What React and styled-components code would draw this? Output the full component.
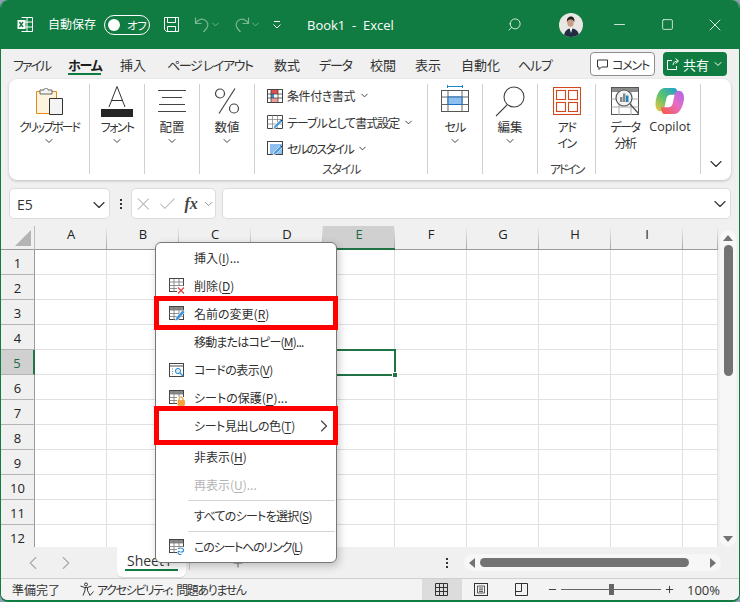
import React from 'react';
import styled, { createGlobalStyle } from 'styled-components';
import {
  ChevronDown,
  ChevronLeft,
  ChevronRight,
  Minus,
  Plus,
  Search,
  Square,
  X,
  Check,
} from 'lucide-react';

const JP = `"Noto Sans CJK JP", "Noto Sans", sans-serif`;
const LATIN = `"Open Sans", "Noto Sans CJK JP", sans-serif`;
const GREEN = '#107c41';
const INK = '#2b2b2b';

const GlobalStyle = createGlobalStyle`
  html, body {
    margin: 0;
    padding: 0;
    background: #8f9fb4;
  }
  body {
    font-family: ${JP};
    font-feature-settings: "palt";
    color: ${INK};
  }
`;

const Window = styled.div`
  width: 740px;
  height: 602px;
  box-sizing: border-box;
  display: flex;
  flex-direction: column;
  background: #f0f0f0;
  border: solid ${GREEN};
  border-width: 0 1px 2px 1px;
  border-radius: 8px;
  overflow: hidden;
  position: relative;
`;

/* title bar */
const TitleBar = styled.div`
  height: 49px;
  flex: none;
  margin: 0 -1px;
  background: ${GREEN};
  color: #fff;
  display: flex;
  align-items: center;
  padding-left: 17px;
  font-size: 12px;
`;

const AutoSave = styled.span`
  margin-left: 14px;
  margin-top: -2px;
  width: 48px;
  font-size: 12px;
  white-space: nowrap;
`;

const Toggle = styled.div`
  margin-left: 8px;
  width: 46px;
  height: 20px;
  box-sizing: border-box;
  border: 1px solid #fff;
  border-radius: 10px;
  display: flex;
  align-items: center;
  padding-left: 3px;
  gap: 7px;
  font-size: 11.5px;
  line-height: 16px;
  letter-spacing: -0.6px;
  &::before {
    content: '';
    width: 12px;
    height: 12px;
    border-radius: 50%;
    background: #fff;
  }
`;

const QuickIcon = styled.span`
  display: flex;
  align-items: center;
  margin-left: ${(p) => p.$gap}px;
  opacity: ${(p) => (p.$dim ? 0.45 : 1)};
`;

const DocTitle = styled.span`
  margin-left: 25px;
  width: 200px;
  font-family: ${LATIN};
  font-size: 13px;
  white-space: pre;
`;

const Avatar = styled.span`
  margin-left: 37px;
  width: 24px;
  height: 24px;
  display: block;
`;

const WinButton = styled.span`
  display: flex;
  justify-content: center;
  align-items: center;
  width: 48px;
`;

const WinButtons = styled.div`
  margin-left: 12px;
  display: flex;
`;

/* tabs row */
const MenuRow = styled.div`
  height: 30px;
  flex: none;
  display: flex;
  align-items: center;
  position: relative;
  padding-left: 12px;
  font-size: 13px;
`;

const MenuTab = styled.span`
  width: ${(p) => p.$w}px;
  margin-right: ${(p) => p.$gap}px;
  height: 30px;
  line-height: 32px;
  white-space: nowrap;
  box-sizing: border-box;
  letter-spacing: ${(p) => p.$ls || 0}px;
  font-weight: ${(p) => (p.$active ? 700 : 400)};
  color: ${(p) => (p.$active ? '#1d1d1d' : '#333')};
  position: relative;
  &::after {
    content: '';
    display: ${(p) => (p.$active ? 'block' : 'none')};
    position: absolute;
    left: 0;
    right: 0;
    top: 24px;
    height: 2px;
    background: ${GREEN};
  }
`;

const MenuRight = styled.div`
  margin-left: auto;
  margin-right: 12px;
  display: flex;
  gap: 8px;
  align-self: flex-start;
  margin-top: 3px;
`;

const CommentButton = styled.span`
  width: 65px;
  height: 24px;
  box-sizing: border-box;
  background: #fff;
  border: 1px solid #8f8f8f;
  border-radius: 4px;
  display: flex;
  align-items: center;
  justify-content: center;
  gap: 3px;
  font-size: 12px;
  letter-spacing: -1.2px;
  color: #333;
`;

const ShareButton = styled.span`
  width: 64px;
  height: 24px;
  background: ${GREEN};
  color: #fff;
  border-radius: 4px;
  display: flex;
  align-items: center;
  justify-content: center;
  gap: 3px;
  font-size: 13px;
`;

/* ribbon */
const Ribbon = styled.div`
  height: 101px;
  flex: none;
  margin: 0 8px;
  box-sizing: border-box;
  background: #fff;
  border-radius: 8px;
  box-shadow: 0 1px 3px rgba(0, 0, 0, 0.22);
  display: flex;
  padding: 5px 0 6px;
`;

const Group = styled.div`
  width: ${(p) => p.$w}px;
  flex: none;
  box-sizing: border-box;
  border-right: 1px solid #d0d0d0;
  display: flex;
  flex-direction: column;
  align-items: center;
  position: relative;
`;

const BigIcon = styled.div`
  height: 32px;
  box-sizing: border-box;
  margin-top: 1px;
  padding-bottom: ${(p) => p.$lift || 0}px;
  display: flex;
  align-items: center;
  justify-content: center;
`;

const BigLabel = styled.div`
  margin-top: 2px;
  font-size: ${(p) => (p.$ls ? 12 : 12.5)}px;
  letter-spacing: ${(p) => p.$ls || 0}px;
  line-height: 16px;
  text-align: center;
  white-space: pre-line;
  color: #333;
`;

const SmallChevron = styled(ChevronDown)`
  margin-top: 0;
  color: #444;
  flex: none;
`;

const GroupName = styled.div`
  margin-top: auto;
  margin-bottom: -2px;
  font-size: 12px;
  letter-spacing: ${(p) => p.$ls || 0}px;
  line-height: 15px;
  color: #444;
  text-align: center;
  white-space: nowrap;
`;

const StyleList = styled.div`
  align-self: flex-start;
  padding-left: 12px;
  margin-top: -1px;
  display: flex;
  flex-direction: column;
  gap: 1.5px;
`;

const StyleRow = styled.div`
  height: 25px;
  display: flex;
  align-items: center;
  gap: 4px;
  font-size: 12px;
  color: #333;
  white-space: nowrap;
`;

const StyleText = styled.span`
  letter-spacing: ${(p) => p.$ls || 0}px;
`;

const RibbonPair = styled.div`
  display: flex;
  gap: 3px;
  padding: 0 0 0 10px;
  align-self: flex-start;
`;

const PairItem = styled.div`
  width: ${(p) => p.$w}px;
  display: flex;
  flex-direction: column;
  align-items: center;
`;

const CopilotLabel = styled(BigLabel)`
  font-family: ${LATIN};
  font-size: 12.5px;
`;

const CollapseButton = styled.div`
  flex: 1;
  display: flex;
  justify-content: center;
  align-items: flex-end;
  color: #333;
`;

/* formula bar */
const FormulaBar = styled.div`
  height: 31px;
  flex: none;
  margin: 8px 8px 0;
  display: flex;
  align-items: stretch;
`;

const FieldBox = styled.div`
  background: #fff;
  border: 1px solid #dcdcdc;
  border-radius: 5px;
  box-sizing: border-box;
  display: flex;
  align-items: center;
`;

const NameBox = styled(FieldBox)`
  width: 101px;
  justify-content: space-between;
  padding: 2px 0 0 7px;
  font-family: ${LATIN};
  font-size: 14px;
  color: #333;
`;

const Dots = styled.span`
  width: 21px;
  flex: none;
  display: flex;
  flex-direction: column;
  align-items: center;
  justify-content: center;
  gap: 2px;
  i {
    width: 2px;
    height: 2px;
    background: #333;
    display: block;
  }
`;

const FxBox = styled(FieldBox)`
  width: 85px;
  padding-left: 1px;
  gap: 3px;
`;

const FxText = styled.span`
  font-family: "Liberation Serif", serif;
  font-style: italic;
  font-weight: 700;
  font-size: 16px;
  color: #444;
  margin-left: 4px;
  margin-right: 1px;
`;

const InputBox = styled(FieldBox)`
  flex: 1;
  margin-left: 6px;
  justify-content: flex-end;
`;

/* sheet */
const SheetArea = styled.div`
  height: 321px;
  flex: none;
  margin-top: 7px;
  display: flex;
  position: relative;
`;

const Sheet = styled.div`
  width: 717px;
  flex: none;
  overflow: hidden;
  display: grid;
  grid-template-columns: 34px repeat(9, 72px) 1fr;
  grid-auto-rows: 25px;
  grid-template-rows: 24px;
  background: #fff;
`;

const Corner = styled.div`
  background: #f0f0f0;
  border-bottom: 1px solid #9a9a9a;
  border-right: 1px solid #bdbdbd;
  box-sizing: border-box;
  display: flex;
  justify-content: flex-end;
  align-items: flex-end;
  padding: 0 3px 3px 0;
`;

const ColHead = styled.div`
  box-sizing: border-box;
  background: linear-gradient(#f0f0f0, #a8a8a8) right / 1px 100% no-repeat,
    ${(p) => (p.$on ? '#d0d0d0' : '#f0f0f0')};
  color: ${(p) => (p.$on ? '#1f6b45' : '#222')};
  border-bottom: ${(p) => (p.$on ? `2px solid #217346` : '1px solid #9a9a9a')};
  font-family: ${LATIN};
  font-size: 13px;
  text-align: center;
  line-height: 17px;
`;

const RowHead = styled.div`
  box-sizing: border-box;
  background: ${(p) => (p.$on ? '#d0d0d0' : '#f0f0f0')};
  color: ${(p) => (p.$on ? '#1f6b45' : '#222')};
  border-bottom: 1px solid #b5b5b5;
  border-right: ${(p) => (p.$on ? `2px solid #217346` : '1px solid #9a9a9a')};
  font-family: ${LATIN};
  font-size: 13px;
  text-align: center;
  line-height: 26px;
`;

const Cell = styled.div`
  box-sizing: border-box;
  border-right: 1px solid #e1e1e1;
  border-bottom: 1px solid #e1e1e1;
  position: relative;
  ${(p) =>
    p.$selected &&
    `
    outline: 2px solid #217346;
    outline-offset: -1px;
    z-index: 1;
    &::after {
      content: '';
      position: absolute;
      right: -4px;
      bottom: -4px;
      background: #217346;
      border: 1px solid #fff;
      box-sizing: content-box;
      width: 4px;
      height: 4px;
    }
  `}
`;

const VScroll = styled.div`
  width: 20px;
  display: flex;
  flex-direction: column;
  align-items: center;
  padding-top: 4px;
  box-sizing: border-box;
`;

const VTrack = styled.div`
  width: 16px;
  height: 100%;
  background: #f7f7f7;
  border-radius: 8px;
  display: flex;
  flex-direction: column;
  align-items: center;
  padding-top: 5px;
  box-sizing: border-box;
`;

const VThumb = styled.div`
  width: 9px;
  height: 131px;
  margin-top: 4px;
  background: #737373;
  border-radius: 5px;
`;

const VSpacer = styled.div`
  flex: 1;
`;

const ArrowUp = styled.div`
  width: 0;
  height: 0;
  border: 5px solid transparent;
  border-top: 0;
  border-bottom: 6px solid #737373;
`;

const ArrowDown = styled(ArrowUp)`
  border-top: 6px solid #737373;
  border-bottom: 0;
  margin-bottom: 5px;
`;

/* context menu */
const ContextMenu = styled.div`
  position: absolute;
  left: 154px;
  top: 16px;
  width: 182px;
  height: 321px;
  box-sizing: border-box;
  background: #fff;
  border: 1px solid #777;
  border-radius: 6px;
  box-shadow: 2px 3px 8px rgba(0, 0, 0, 0.22);
  padding-top: 1px;
  z-index: 5;
  font-size: 12px;
`;

const MenuItem = styled.div`
  height: 28px;
  display: flex;
  align-items: center;
  padding-left: 13px;
  color: ${(p) => (p.$disabled ? '#b4b4b4' : '#2f2f2f')};
  white-space: nowrap;
  position: relative;
`;

const ItemIcon = styled.span`
  width: 16px;
  height: 16px;
  flex: none;
  margin-right: 9px;
  display: block;
`;

const ItemText = styled.span`
  margin-top: -2px;
  letter-spacing: ${(p) => p.$ls || 0}px;
`;

const Key = styled.span`
  text-decoration: underline;
  text-underline-offset: 2px;
`;

const SubArrow = styled(ChevronRight)`
  position: absolute;
  right: 2px;
  top: 4px;
  color: #444;
`;

const MenuSep = styled.div`
  height: 3px;
  display: flex;
  align-items: center;
  padding-left: 32px;
  padding-right: 1px;
  &::after {
    content: '';
    flex: 1;
    height: 1px;
    background: #d4d4d4;
  }
`;

const RedBox = styled.div`
  position: absolute;
  left: -2px;
  width: 184px;
  top: ${(p) => p.$top}px;
  height: ${(p) => p.$h}px;
  box-sizing: border-box;
  border: 5px solid #ff0000;
  pointer-events: none;
`;

/* sheet tabs */
const TabBar = styled.div`
  height: 32px;
  flex: none;
  display: flex;
  align-items: flex-start;
  position: relative;
  border-bottom: 1px solid #cfcfcf;
  box-sizing: border-box;
`;

const NavArrows = styled.div`
  width: 116px;
  height: 31px;
  box-sizing: border-box;
  padding-left: 21px;
  display: flex;
  align-items: center;
  gap: 11px;
  color: #a8a8a8;
`;

const SheetTab = styled.div`
  width: 69px;
  height: 30px;
  box-sizing: border-box;
  background: #fff;
  border-radius: 0 0 6px 6px;
  font-family: ${LATIN};
  font-size: 14px;
  color: #333;
  padding: 5px 0 0 10px;
  line-height: 17px;
  position: relative;
  box-shadow: 0 1px 1px rgba(0, 0, 0, 0.1);
  &::after {
    content: '';
    position: absolute;
    left: 8px;
    right: 8px;
    bottom: 6px;
    height: 2px;
    background: ${GREEN};
  }
`;

const TabSep = styled.span`
  width: 1px;
  height: 16px;
  margin: 7px 0 0 3px;
  background: #c4c4c4;
`;

const AddSheet = styled.span`
  width: 16px;
  height: 31px;
  margin-left: 40px;
  display: flex;
  align-items: center;
  justify-content: center;
  color: #333;
`;

const TabDots = styled(Dots)`
  margin-left: 190px;
  height: 31px;
`;

const HScroll = styled.div`
  margin-left: 7px;
  margin-top: 7px;
  width: 257px;
  height: 17px;
  background: #f7f7f7;
  border-radius: 9px;
  display: flex;
  align-items: center;
  padding: 0 5px;
  box-sizing: border-box;
`;

const HThumb = styled.div`
  width: 209px;
  height: 9px;
  margin-left: 5px;
  background: #737373;
  border-radius: 5px;
`;

const ArrowLeft = styled.div`
  width: 0;
  height: 0;
  border: 5px solid transparent;
  border-left: 0;
  border-right: 6px solid #737373;
`;

const ArrowRight = styled.div`
  width: 0;
  height: 0;
  margin-left: auto;
  border: 5px solid transparent;
  border-right: 0;
  border-left: 6px solid #737373;
`;

/* status bar */
const StatusBar = styled.div`
  flex: 1;
  display: flex;
  align-items: center;
  background: #f3f3f3;
  font-size: 12px;
  color: #333;
  padding: 0 19px 0 11px;
`;

const StatusText = styled.span`
  white-space: pre;
  margin-left: ${(p) => p.$gap || 0}px;
  letter-spacing: ${(p) => p.$ls || 0}px;
  word-spacing: ${(p) => (p.$ls ? 3 : 0)}px;
  display: flex;
  align-items: center;
`;

const ViewButton = styled.span`
  height: 100%;
  width: 40px;
  display: flex;
  align-items: center;
  justify-content: center;
  background: ${(p) => (p.$on ? '#dcdcdc' : 'transparent')};
`;

const ViewGroup = styled.div`
  margin-left: auto;
  height: 100%;
  display: flex;
  margin-right: 5px;
`;

const ZoomSlider = styled.div`
  width: 100px;
  height: 1px;
  margin: 0 3px;
  background: #666;
  position: relative;
  &::after {
    content: '';
    position: absolute;
    left: 48px;
    top: -5px;
    width: 5px;
    height: 11px;
    background: #666;
  }
`;

const ZoomValue = styled.span`
  margin-left: 12px;
  font-family: ${LATIN};
  font-size: 13px;
`;

const ExcelIcon = () => (
  <svg width="17" height="17" viewBox="0 0 17 17">
    <path d="M4.5 1.5h11v14h-11M10 1.5v14M4.5 6h11M4.5 11h11" fill="none" stroke="#fff" />
    <rect x="0.5" y="4" width="8" height="9" fill="#fff" />
    <path d="M2.4 6l3.6 5M6 6l-3.6 5" stroke={GREEN} strokeWidth="1.4" />
  </svg>
);

const SaveIcon = () => (
  <svg width="17" height="17" viewBox="0 0 17 17" fill="none" stroke="#fff">
    <path d="M1.5 1.5h14v14h-12l-2-2z" />
    <path d="M4.5 1.5v5h8v-5M4.5 15.5v-5h8v5" />
  </svg>
);

const UndoIcon = ({ flip }) => (
  <svg width="16" height="17" viewBox="0 0 16 17" fill="none" stroke="#fff" strokeWidth="1.2" style={flip ? { transform: 'scaleX(-1)' } : undefined}>
    <path d="M1.5 1.5v6h6M1.5 7.5C4 4 7 2.5 10 3.5c4 1.5 5 6 2.5 9l-3 3.5" />
  </svg>
);

const PersonAvatar = () => (
  <Avatar>
    <svg width="24" height="24" viewBox="0 0 24 24">
      <defs>
        <clipPath id="av">
          <circle cx="12" cy="12" r="12" />
        </clipPath>
      </defs>
      <g clipPath="url(#av)">
        <rect width="24" height="24" fill="#e9e7e3" />
        <path d="M5 24c0-6 3-8 7-9 5 1 8 3 8 9z" fill="#232c40" />
        <path d="M10.5 15l1.500 5 1.500-5z" fill="#fff" />
        <ellipse cx="11.5" cy="9.5" rx="3.2" ry="4.3" fill="#c99d85" />
        <path d="M8 9c-.5-4 2-5.500 4-5.500s4 1.500 3.300 5.500c-1-2-2-2.500-3.800-2.500S9 7 8 9z" fill="#23201f" />
      </g>
    </svg>
  </Avatar>
);

const ClipboardIcon = () => (
  <svg width="27" height="27" viewBox="0 0 27 27">
    <path d="M.5 3.500h20v22H.5z" fill="#fdf3df" stroke="#e58a0c" />
    <path d="M4 2h4c0-2.500 4-2.500 4 0h4v4H4z" fill="#f3f3f3" stroke="#666" />
    <path d="M13.500 10.500h13v16h-13z" fill="#f4f4f4" stroke="#333" />
  </svg>
);

const FontIcon = () => (
  <svg width="32" height="31" viewBox="0 0 32 31">
    <path d="M8 21L16 .5l8 20.500M10.500 14.500h11" fill="none" stroke="#333" />
    <rect y="23" width="32" height="8" fill="#262626" />
  </svg>
);

const AlignIcon = () => (
  <svg width="28" height="22" viewBox="0 0 28 22" fill="none" stroke="#444">
    <path d="M0 .5h28M4 7.500h20M1 14.500h26M0 21.500h28" />
  </svg>
);

const PercentIcon = () => (
  <svg width="26" height="26" viewBox="0 0 26 26" fill="none" stroke="#444" strokeWidth="1.2">
    <circle cx="6" cy="5.500" r="4.500" />
    <circle cx="20" cy="20.500" r="4.500" />
    <path d="M21 .5L5 25.500" />
  </svg>
);

const ConditionalIcon = () => (
  <svg width="16" height="14" viewBox="0 0 16 14">
    <rect x=".5" y=".5" width="15" height="13" fill="#fff" stroke="#444" />
    <rect x="4" y="1" width="7" height="4" fill="#e04f4f" />
    <rect x="4" y="5" width="3" height="4" fill="#3a8fd8" />
    <rect x="4" y="9" width="7" height="4" fill="#f29a9a" />
    <path d="M.5 5h15M.5 9h15M4 .5v13M11 .5v13" stroke="#444" fill="none" strokeWidth=".8" />
  </svg>
);

const PenMark = () => (
  <>
    <path d="M6 14l1-3 6.500-6.500 2 2L9 13z" fill="#4f9bdc" stroke="#fff" strokeWidth=".6" />
    <path d="M13.500 4.500l2 2" stroke="#333" />
  </>
);

const TableFormatIcon = () => (
  <svg width="16" height="15" viewBox="0 0 16 15">
    <path d="M.5.500h15v13H.5z" fill="#fff" stroke="#444" />
    <path d="M.5 4.500h15M.5 9h15M5.500.5v13M10.500.5v13" stroke="#888" fill="none" strokeWidth=".8" />
    <PenMark />
  </svg>
);

const CellStyleIcon = () => (
  <svg width="16" height="15" viewBox="0 0 16 15">
    <rect x=".5" y=".5" width="15" height="13" fill="#fff" stroke="#444" />
    <rect x="3" y="3" width="12" height="10" fill="#8dc0ee" />
    <PenMark />
  </svg>
);

const CellIcon = () => (
  <svg width="28" height="27" viewBox="0 0 28 27">
    <path d="M6 1.500h16" stroke="#1a86c8" />
    <path d="M6.500 0v3M21.500 0v3" stroke="#1a86c8" />
    <rect x=".5" y="5.500" width="27" height="21" fill="#fff" stroke="#555" />
    <path d="M.5 12h27M.5 19.500h27M7 5.500v21M21 5.500v21" stroke="#666" />
    <rect x="7" y="12" width="14" height="7.500" fill="#8dc0ee" stroke="#1a6fc0" />
  </svg>
);

const SearchBigIcon = () => (
  <svg width="30" height="31" viewBox="0 0 30 31" fill="none" stroke="#444" strokeWidth="1.1">
    <circle cx="19" cy="11" r="10" />
    <path d="M12 19L1 30" />
  </svg>
);

const AddinIcon = () => (
  <svg width="28" height="28" viewBox="0 0 28 28" fill="none" stroke="#d2471c" strokeWidth="1.1">
    <rect x=".5" y=".5" width="27" height="27" />
    <rect x="3.500" y="3.500" width="9" height="9" />
    <rect x="15.500" y="3.500" width="9" height="9" />
    <rect x="3.500" y="15.500" width="9" height="9" />
    <rect x="15.500" y="15.500" width="9" height="9" />
  </svg>
);

const AnalysisIcon = () => (
  <svg width="28" height="28" viewBox="0 0 28 28">
    <rect x=".5" y=".5" width="27" height="27" fill="#fff" stroke="#555" />
    <rect x="1" y="1" width="26" height="4" fill="#8c8c8c" />
    <path d="M.5 12h27M.5 20h27M8 5v23M20 5v23" stroke="#aaa" />
    <circle cx="13" cy="11" r="8" fill="#f2f2f2" stroke="#555" strokeWidth="1.200" />
    <rect x="9" y="10" width="2.500" height="5" fill="#888" />
    <rect x="12" y="6.500" width="2.500" height="8.500" fill="#888" />
    <rect x="15" y="8.500" width="2.500" height="6.500" fill="#1a86c8" />
    <path d="M19 17l9 10" stroke="#555" strokeWidth="1.400" />
  </svg>
);

const CopilotIcon = () => (
  <svg width="30" height="28" viewBox="0 0 30 29">
    <defs>
      <linearGradient id="cpA" x1="0" y1="1" x2="1" y2="0">
        <stop offset="0" stopColor="#f7c33f" />
        <stop offset=".45" stopColor="#5cc46a" />
        <stop offset="1" stopColor="#1c9be0" />
      </linearGradient>
      <linearGradient id="cpB" x1="0" y1="1" x2="1" y2="0">
        <stop offset="0" stopColor="#f55a3c" />
        <stop offset=".55" stopColor="#e66cc4" />
        <stop offset="1" stopColor="#a868ee" />
      </linearGradient>
    </defs>
    <path d="M9 1h10c2 0 3 1 3.500 3L24 8h-8c-3 0-4.500 2-5 5l-2 9c-.5 2-2 3-4 3-3 0-5-3-5-7 0-8 4-17 9-17z" fill="url(#cpA)" />
    <path d="M20 28H10c-2 0-3-1-3.500-3L5.500 21H13c3 0 4.500-2 5-5l2-9c.5-2 2-3 4-3 3.500 0 5.500 3 5.500 7 0 8-4.500 17-9.500 17z" fill="url(#cpB)" />
  </svg>
);

const CommentIcon = () => (
  <svg width="13" height="13" viewBox="0 0 13 13" fill="none" stroke="#333">
    <path d="M1.500 2h10v7H5.500l-2.500 2.500V9H1.500z" />
  </svg>
);

const ShareIcon = () => (
  <svg width="14" height="14" viewBox="0 0 14 14" fill="none" stroke="#fff">
    <path d="M6 3.500H1.500v9h9V9M7 8c.5-3 2-4 5-4M9.500 1.500l3 2.500-3 2.500" />
  </svg>
);

const TableBase = ({ header }) => (
  <>
    <rect x=".5" y=".5" width="14" height="13" fill="#fff" stroke="#444" />
    {header && <rect x="1" y="1" width="13" height="3" fill="#8a8a8a" />}
    <path d="M.5 4h14M.5 7.500h14M.5 10.500h14M5 1v13M10 1v13" stroke="#777" fill="none" strokeWidth=".8" />
  </>
);

const DeleteIcon = () => (
  <svg width="16" height="16" viewBox="0 0 16 16">
    <TableBase />
    <rect x="8" y="8" width="8" height="8" fill="#fff" />
    <path d="M9 9.500l6 6M15 9.500l-6 6" stroke="#e0433f" strokeWidth="1.300" />
  </svg>
);

const RenameIcon = () => (
  <svg width="16" height="16" viewBox="0 0 16 16">
    <TableBase header />
    <path d="M6 15l1-3.500 6.500-7.500 2.500 2-7 8z" fill="#3f93d8" stroke="#fff" strokeWidth=".6" />
  </svg>
);

const CodeIcon = () => (
  <svg width="16" height="16" viewBox="0 0 16 16" fill="none">
    <rect x=".5" y="1.500" width="14" height="13" fill="#fff" stroke="#444" />
    <path d="M1 4h13" stroke="#888" strokeWidth="1.500" />
    <path d="M3 7h1M3 9.500h1M3 12h1" stroke="#888" />
    <circle cx="9" cy="9" r="2.600" stroke="#2a86d0" fill="#d8ebf9" />
    <path d="M11 11l3.500 3.500" stroke="#2a86d0" strokeWidth="1.300" />
  </svg>
);

const ProtectIcon = () => (
  <svg width="16" height="16" viewBox="0 0 16 16">
    <TableBase header />
    <rect x="8" y="7" width="8" height="9" fill="#fff" />
    <path d="M10 10.500V9a2 2 0 0 1 4 0v1.500" stroke="#e58a0c" fill="none" />
    <rect x="9" y="10.500" width="6.500" height="5" fill="#f3a43a" stroke="#e58a0c" strokeWidth=".5" />
  </svg>
);

const LinkIcon = () => (
  <svg width="16" height="16" viewBox="0 0 16 16">
    <TableBase header />
    <rect x="8" y="8" width="8" height="8" fill="#fff" />
    <path d="M9 10c1-1.500 4.500-1.500 5.500.5.500 1.500-1 3-3 2.500M12.500 15.500c-1.500.5-3.500-.5-3.500-2 0-1 1-1.500 2-1" stroke="#2a86d0" fill="none" strokeWidth="1.100" />
  </svg>
);

const A11yIcon = () => (
  <svg width="15" height="15" viewBox="0 0 15 15" fill="none" stroke="#333">
    <circle cx="6" cy="2.500" r="1.500" />
    <path d="M.5 4l4 1.500h3l4-1.500M5 5.500v3l-2 5M7.500 5.500v3l1 2 1.500 3l3.500-4" />
  </svg>
);

const GridViewIcon = () => (
  <svg width="14" height="14" viewBox="0 0 14 14" fill="none" stroke="#333">
    <path d="M.5.500h12v12H.5zM.5 4.500h12M.5 8.500h12M4.500.5v12M8.500.5v12" />
  </svg>
);

const PageViewIcon = () => (
  <svg width="15" height="14" viewBox="0 0 15 14" fill="none" stroke="#333">
    <rect x=".5" y=".5" width="13" height="12" />
    <path d="M3.500 3h7v7h-7zM5 5h4M5 6.800h4M5 8.500h4" strokeWidth=".8" />
  </svg>
);

const BreakViewIcon = () => (
  <svg width="14" height="14" viewBox="0 0 14 14" fill="none" stroke="#333">
    <path d="M.5.500h12v12H.5zM.5 8.500h6v-8" />
  </svg>
);

const columns = ['A', 'B', 'C', 'D', 'E', 'F', 'G', 'H', 'I', ''];
const rows = [1, 2, 3, 4, 5, 6, 7, 8, 9, 10, 11, 12];

const App = () => {
  return (
    <>
      <GlobalStyle />
      <Window>
        <TitleBar>
          <ExcelIcon />
          <AutoSave>自動保存</AutoSave>
          <Toggle>オフ</Toggle>
          <QuickIcon $gap={13}><SaveIcon /></QuickIcon>
          <QuickIcon $gap={14} $dim><UndoIcon /><ChevronDown size={11} /></QuickIcon>
          <QuickIcon $gap={13} $dim><UndoIcon flip /><ChevronDown size={11} /></QuickIcon>
          <QuickIcon $gap={11}>
            <svg width="10" height="8" viewBox="0 0 10 8" fill="none" stroke="#fff"><path d="M2 .5h6M1.500 3.500L5 7l3.500-3.500" /></svg>
          </QuickIcon>
          <DocTitle>Book1  -  Excel</DocTitle>
          <Search size={15} strokeWidth={1.3} style={{ transform: 'scaleX(-1)' }} />
          <PersonAvatar />
          <WinButtons>
            <WinButton><Minus size={17} strokeWidth={1.1} /></WinButton>
            <WinButton><Square size={13} strokeWidth={1.4} /></WinButton>
            <WinButton><X size={20} strokeWidth={1} /></WinButton>
          </WinButtons>
        </TitleBar>

        <MenuRow>
          <MenuTab $w={37} $gap={18} $ls={-2}>ファイル</MenuTab>
          <MenuTab $w={33} $gap={19} $active $ls={-1.2}>ホーム</MenuTab>
          <MenuTab $w={26} $gap={21}>挿入</MenuTab>
          <MenuTab $w={86} $gap={21} $ls={-1.4}>ページ レイアウト</MenuTab>
          <MenuTab $w={26} $gap={19}>数式</MenuTab>
          <MenuTab $w={31} $gap={20} $ls={-1.2}>データ</MenuTab>
          <MenuTab $w={26} $gap={19}>校閲</MenuTab>
          <MenuTab $w={26} $gap={20}>表示</MenuTab>
          <MenuTab $w={38} $gap={19}>自動化</MenuTab>
          <MenuTab $w={32} $gap={0} $ls={-1.2}>ヘルプ</MenuTab>
          <MenuRight>
            <CommentButton><CommentIcon />コメント</CommentButton>
            <ShareButton><ShareIcon />共有<ChevronDown size={12} /></ShareButton>
          </MenuRight>
        </MenuRow>

        <Ribbon>
          <Group $w={81}>
            <BigIcon><ClipboardIcon /></BigIcon>
            <BigLabel $ls={-2}>クリップボード</BigLabel>
            <SmallChevron size={12} />
          </Group>
          <Group $w={55}>
            <BigIcon><FontIcon /></BigIcon>
            <BigLabel $ls={-1.7}>フォント</BigLabel>
            <SmallChevron size={12} />
          </Group>
          <Group $w={55}>
            <BigIcon><AlignIcon /></BigIcon>
            <BigLabel>配置</BigLabel>
            <SmallChevron size={12} />
          </Group>
          <Group $w={55}>
            <BigIcon><PercentIcon /></BigIcon>
            <BigLabel>数値</BigLabel>
            <SmallChevron size={12} />
          </Group>
          <Group $w={173}>
            <StyleList>
              <StyleRow><ConditionalIcon /><StyleText $ls={-0.4}>条件付き書式</StyleText><ChevronDown size={11} /></StyleRow>
              <StyleRow><TableFormatIcon /><StyleText $ls={-1}>テーブルとして書式設定</StyleText><ChevronDown size={11} /></StyleRow>
              <StyleRow><CellStyleIcon /><StyleText $ls={-1.6}>セルのスタイル</StyleText><ChevronDown size={11} /></StyleRow>
            </StyleList>
            <GroupName $ls={-1.3}>スタイル</GroupName>
          </Group>
          <Group $w={55}>
            <BigIcon $lift={6}><CellIcon /></BigIcon>
            <BigLabel $ls={-1}>セル</BigLabel>
            <SmallChevron size={12} />
          </Group>
          <Group $w={55}>
            <BigIcon><SearchBigIcon /></BigIcon>
            <BigLabel>編集</BigLabel>
            <SmallChevron size={12} />
          </Group>
          <Group $w={58}>
            <BigIcon><AddinIcon /></BigIcon>
            <BigLabel $ls={-1.5}>{'アド\nイン'}</BigLabel>
            <GroupName $ls={-2.2}>アドイン</GroupName>
          </Group>
          <Group $w={105}>
            <RibbonPair>
              <PairItem $w={38}>
                <BigIcon><AnalysisIcon /></BigIcon>
                <BigLabel $ls={-1.5}>{'データ\n分析'}</BigLabel>
              </PairItem>
              <PairItem $w={46}>
                <BigIcon><CopilotIcon /></BigIcon>
                <CopilotLabel>Copilot</CopilotLabel>
              </PairItem>
            </RibbonPair>
          </Group>
          <CollapseButton><ChevronDown size={20} strokeWidth={1.4} /></CollapseButton>
        </Ribbon>

        <FormulaBar>
          <NameBox>E5<ChevronDown size={20} strokeWidth={1.4} /></NameBox>
          <Dots><i /><i /><i /></Dots>
          <FxBox>
            <X size={22} strokeWidth={1.2} color="#bbb" />
            <Check size={22} strokeWidth={1.2} color="#bbb" />
            <FxText>fx</FxText>
            <ChevronDown size={14} strokeWidth={1.6} color="#888" />
          </FxBox>
          <InputBox><ChevronDown size={20} strokeWidth={1.4} color="#333" /></InputBox>
        </FormulaBar>

        <SheetArea>
          <Sheet>
            <Corner>
              <svg width="16" height="16" viewBox="0 0 16 16"><path d="M16 0v16H0z" fill="#b4b4b4" /></svg>
            </Corner>
            {columns.map((c, i) => (
              <ColHead key={i} $on={c === 'E'}>{c}</ColHead>
            ))}
            {rows.map((r) => (
              <React.Fragment key={r}>
                <RowHead $on={r === 5}>{r}</RowHead>
                {columns.map((c, i) => (
                  <Cell key={i} $selected={r === 5 && c === 'E'} />
                ))}
              </React.Fragment>
            ))}
          </Sheet>
          <VScroll>
            <VTrack>
              <ArrowUp />
              <VThumb />
              <VSpacer />
              <ArrowDown />
            </VTrack>
          </VScroll>

          <ContextMenu>
            <MenuItem><ItemIcon /><ItemText>挿入(<Key>I</Key>)...</ItemText></MenuItem>
            <MenuItem><ItemIcon><DeleteIcon /></ItemIcon><ItemText>削除(<Key>D</Key>)</ItemText></MenuItem>
            <MenuItem><ItemIcon><RenameIcon /></ItemIcon><ItemText>名前の変更(<Key>R</Key>)</ItemText></MenuItem>
            <MenuItem><ItemIcon /><ItemText $ls={-0.8}>移動またはコピー(<Key>M</Key>)...</ItemText></MenuItem>
            <MenuItem><ItemIcon><CodeIcon /></ItemIcon><ItemText $ls={-0.5}>コードの表示(<Key>V</Key>)</ItemText></MenuItem>
            <MenuItem><ItemIcon><ProtectIcon /></ItemIcon><ItemText>シートの保護(<Key>P</Key>)...</ItemText></MenuItem>
            <MenuItem><ItemIcon /><ItemText $ls={-0.4}>シート見出しの色(<Key>T</Key>)</ItemText><SubArrow size={20} strokeWidth={1.4} /></MenuItem>
            <MenuSep />
            <MenuItem><ItemIcon /><ItemText>非表示(<Key>H</Key>)</ItemText></MenuItem>
            <MenuItem $disabled><ItemIcon /><ItemText>再表示(<Key>U</Key>)...</ItemText></MenuItem>
            <MenuSep />
            <MenuItem><ItemIcon /><ItemText $ls={-0.7}>すべてのシートを選択(<Key>S</Key>)</ItemText></MenuItem>
            <MenuSep />
            <MenuItem><ItemIcon><LinkIcon /></ItemIcon><ItemText $ls={-1.2}>このシートへのリンク(<Key>L</Key>)</ItemText></MenuItem>
            <RedBox $top={53} $h={34} />
            <RedBox $top={163} $h={39} />
          </ContextMenu>
        </SheetArea>

        <TabBar>
          <NavArrows>
            <ChevronLeft size={22} strokeWidth={1.2} />
            <ChevronRight size={22} strokeWidth={1.2} />
          </NavArrows>
          <SheetTab>Sheet1</SheetTab>
          <TabSep />
          <AddSheet><Plus size={14} strokeWidth={1.2} /></AddSheet>
          <TabDots><i /><i /><i /></TabDots>
          <HScroll>
            <ArrowLeft />
            <HThumb />
            <ArrowRight />
          </HScroll>
        </TabBar>

        <StatusBar>
          <StatusText>準備完了</StatusText>
          <StatusText $gap={20}><A11yIcon /></StatusText>
          <StatusText $gap={2} $ls={-1.4}>アクセシビリティ: 問題ありません</StatusText>
          <ViewGroup>
            <ViewButton $on><GridViewIcon /></ViewButton>
            <ViewButton><PageViewIcon /></ViewButton>
            <ViewButton><BreakViewIcon /></ViewButton>
          </ViewGroup>
          <Minus size={11} />
          <ZoomSlider />
          <Plus size={11} />
          <ZoomValue>100%</ZoomValue>
        </StatusBar>
      </Window>
    </>
  );
};

export default App;
